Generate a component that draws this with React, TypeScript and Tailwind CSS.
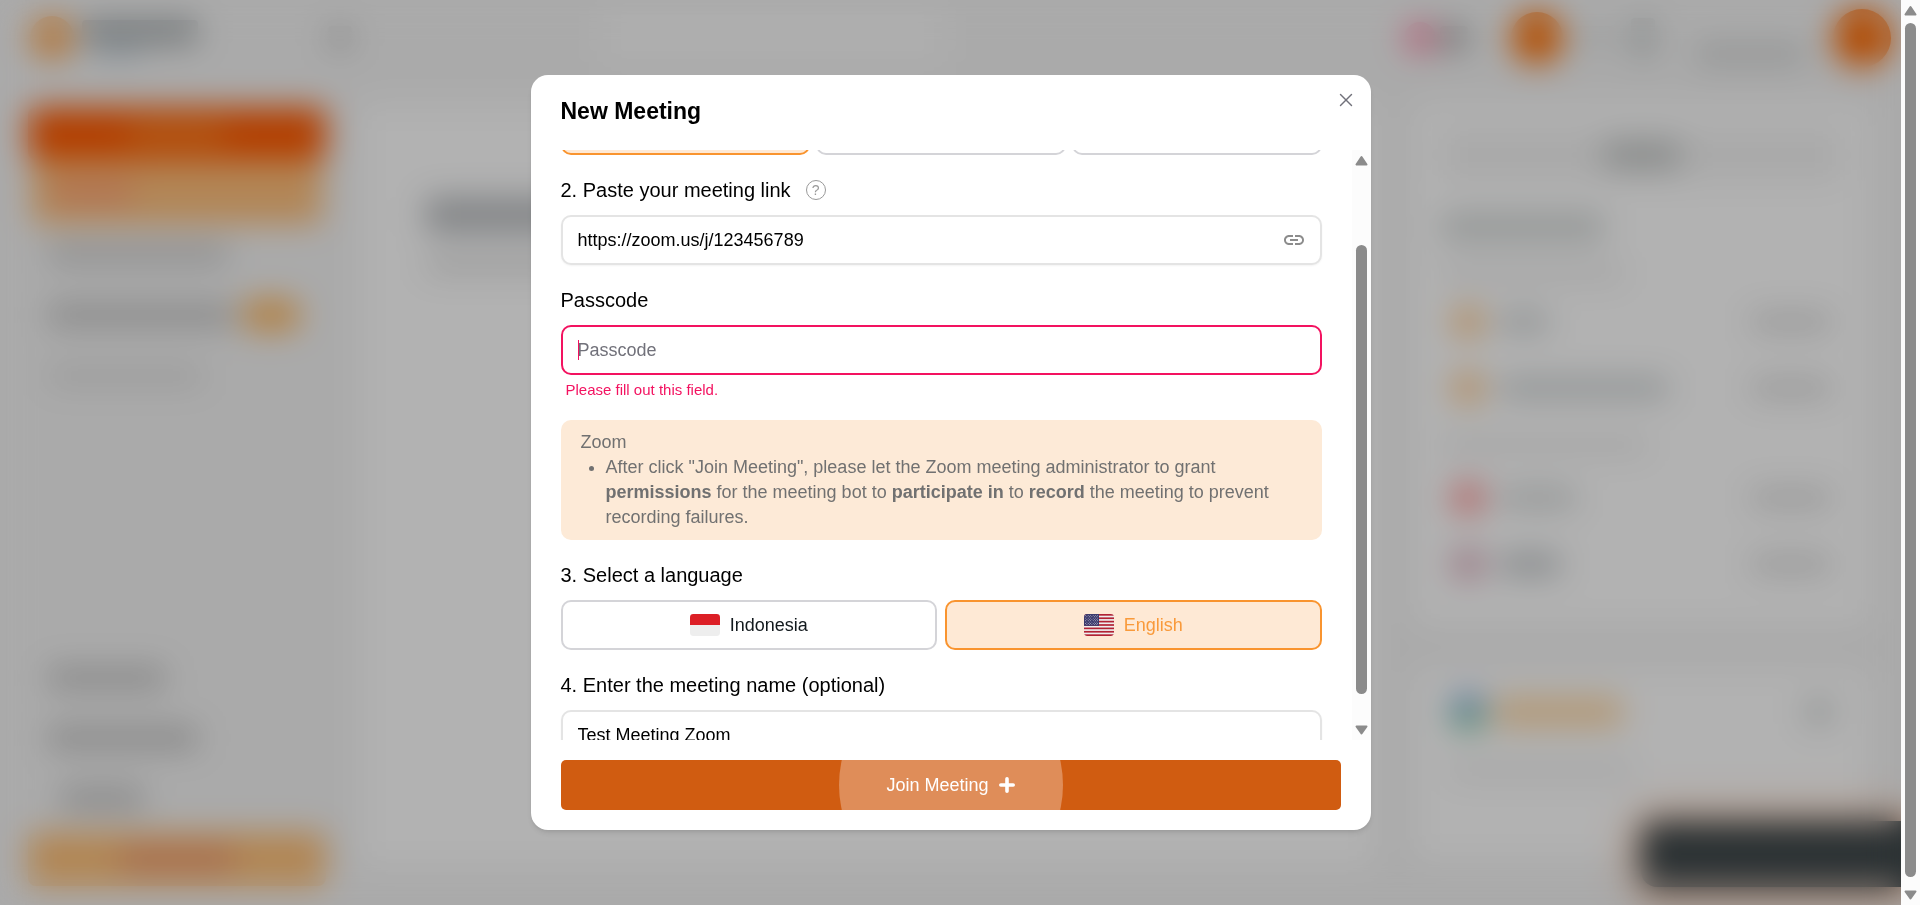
import { useLayoutEffect, useRef, useState } from "react";
import type { ReactNode } from "react";
import { X } from "lucide-react";
import { MdLink } from "react-icons/md";

/* ---------- Scrollbars ---------- */

function Arrow({ down = false }: { down?: boolean }) {
  return (
    <svg viewBox="0 0 19 19" className="size-[19px] shrink-0" aria-hidden="true">
      <path
        d={down ? "M4.5 5.5h10l-5 7z" : "M4.5 14.5h10l-5 -7.5z"}
        fill="#8b8b8b"
        stroke="#8b8b8b"
        strokeWidth="2"
        strokeLinejoin="round"
      />
    </svg>
  );
}

function Scrollbar({ before, thumb, after }: { before: number; thumb: number; after: number }) {
  return (
    <div aria-hidden="true" className="flex w-[19px] shrink-0 flex-col items-center bg-[#fcfcfc]">
      <Arrow />
      <div style={{ flexGrow: before }} />
      <div className="w-[11px] rounded-full bg-[#8b8b8b]" style={{ flexGrow: thumb }} />
      <div style={{ flexGrow: after }} />
      <Arrow down />
    </div>
  );
}

/* ---------- Dashboard behind the dialog ---------- */

function ListRow({ icon, name }: { icon: string; name: string }) {
  return (
    <div className="flex h-[66px] items-center">
      <span className={`size-8 rounded-full ${icon}`} />
      <span className={`ml-4 h-5 rounded ${name}`} />
      <span className="ml-auto h-5 w-20 rounded bg-[#dcdcdc]" />
    </div>
  );
}

function Dashboard() {
  return (
    <div aria-hidden="true" className="flex h-full flex-col bg-[#f4f4f4]">
      <div className="flex h-[75px] shrink-0 items-center pl-[30px]">
        <span className="size-11 rounded-full bg-[#ffac5a]" />
        <div className="ml-2 flex flex-col gap-1">
          <span className="h-6 w-[116px] rounded bg-[#a8aeb0]" />
          <span className="ml-3 h-2 w-12 rounded bg-[#b4cbdc]" />
        </div>
        <span className="ml-[130px] size-6 rounded bg-[#cacaca]" />
        <span className="ml-[248px] h-12 w-[345px] rounded-lg bg-[#fafafa]" />
        <div className="ml-auto flex items-center pr-[10px]">
          <span className="size-8 rounded-full bg-[#ff90ae]" />
          <span className="ml-1 h-6 w-7 rounded bg-[#ababab]" />
          <span className="ml-[43px] size-[52px] rounded-full bg-[#ff7206]" />
          <span className="ml-3 h-6 w-10 rounded bg-[#e4e6e6]" />
          <span className="ml-4 h-10 w-6 rounded bg-[#cdd1d1]" />
          <span className="ml-10 mt-8 h-6 w-[110px] rounded bg-[#d8dada]" />
          <span className="ml-[28px] size-[58px] rounded-full bg-[#ff6a00]" />
        </div>
      </div>

      <div className="flex min-h-0 flex-1">
        <div className="flex w-[360px] shrink-0 flex-col pb-[19px] pl-[28px] pr-[34px]">
          <div className="mt-[32px] flex h-[53px] shrink-0 items-center justify-center rounded-lg bg-[#ff5a00]">
            <span className="h-4 w-24 rounded bg-[#ff8c28]" />
          </div>
          <div className="mx-1 flex h-[64px] shrink-0 items-center rounded-lg bg-[#ffc07c] pl-5">
            <span className="h-5 w-20 rounded bg-[#ff9f75]" />
          </div>
          <div className="flex h-[60px] shrink-0 items-center pl-5">
            <span className="h-5 w-[180px] rounded bg-[#cccccc]" />
          </div>
          <div className="flex h-[62px] shrink-0 items-center pl-5">
            <span className="h-6 w-[185px] rounded bg-[#c8c8c8]" />
            <span className="ml-2 h-8 w-[60px] rounded-full bg-[#ffb860]" />
          </div>
          <div className="flex h-[60px] shrink-0 items-center pl-5">
            <span className="h-5 w-[155px] rounded bg-[#dedede]" />
          </div>
          <div className="mt-auto flex h-[60px] items-center pl-5">
            <span className="h-6 w-[118px] rounded bg-[#c8c8c8]" />
          </div>
          <div className="flex h-[60px] items-center pl-5">
            <span className="h-6 w-[150px] rounded bg-[#c6c6c6]" />
          </div>
          <div className="mb-1 flex h-[60px] items-center pl-8">
            <span className="h-6 w-[84px] rounded bg-[#c8c8c8]" />
          </div>
          <div className="flex h-[54px] items-center justify-center rounded-lg bg-[#ffc078]">
            <span className="h-6 w-28 rounded bg-[#ee9c70]" />
          </div>
        </div>

        <div className="mb-[38px] mt-[30px] flex-1 rounded-xl bg-white px-[66px] pt-[92px]">
          <div className="h-9 w-[260px] rounded bg-[#bcbfc2]" />
          <div className="mt-6 h-4 w-[200px] rounded bg-[#dcdcdc]" />
        </div>

        <div className="ml-10 mr-8 mt-[30px] flex w-[455px] shrink-0 flex-col gap-[45px]">
          <div className="flex h-[520px] shrink-0 flex-col rounded-xl bg-white px-[28px]">
            <div className="mt-6 flex h-[52px] shrink-0 items-center justify-center rounded-lg bg-[#f3f3f3]">
              <span className="h-7 w-[76px] rounded bg-[#c6c9c8]" />
            </div>
            <span className="mt-8 h-7 w-[162px] shrink-0 rounded bg-[#d6dad9]" />
            <span className="mt-6 h-4 w-[182px] shrink-0 rounded bg-[#eaeaea]" />
            <div className="mt-2 px-[10px]">
              <ListRow icon="bg-[#ffc888]" name="w-12 bg-[#ced3d4]" />
              <ListRow icon="bg-[#ffc888]" name="w-[168px] bg-[#ced3d4]" />
            </div>
            <span className="mt-4 h-4 w-[205px] shrink-0 rounded bg-[#eaeaea]" />
            <div className="mt-3 px-[10px]">
              <ListRow icon="bg-[#ff8c8c]" name="w-[76px] bg-[#d4d8d8]" />
              <ListRow icon="bg-[#dcaabb]" name="w-[60px] bg-[#bcc1c4]" />
            </div>
          </div>
          <div className="flex h-[190px] shrink-0 flex-col rounded-xl bg-white px-[36px] pt-[24px]">
            <div className="flex items-center">
              <span className="flex size-9 flex-col overflow-hidden rounded-full bg-[#78c8a0]">
                <span className="h-4 bg-[#86acf0]" />
              </span>
              <span className="ml-2 h-7 w-[128px] rounded bg-[#ffd8a4]" />
              <span className="ml-auto size-7 rounded bg-[#d8dbda]" />
            </div>
            <span className="mt-8 h-4 w-[182px] rounded bg-[#ececec]" />
          </div>
        </div>
      </div>
      <div className="absolute bottom-[18px] right-0 h-[66px] w-[260px] rounded-l-2xl bg-[#3f484b] shadow-[0_0_28px_12px_rgba(255,140,70,0.4)]" />
    </div>
  );
}

/* ---------- Flags ---------- */

function IndonesiaFlag() {
  return (
    <svg viewBox="0 0 36 26" className="h-[22px] w-[30px]" preserveAspectRatio="none" aria-hidden="true">
      <path fill="#DC1F26" d="M32 0H4a4 4 0 0 0-4 4v9h36V4a4 4 0 0 0-4-4z" />
      <path fill="#EEE" d="M36 22a4 4 0 0 1-4 4H4a4 4 0 0 1-4-4v-9h36v9z" />
    </svg>
  );
}

const starRows = [1.6, 3.2, 4.8, 6.4, 8, 9.6, 11.2, 12.6];

function UsaFlag() {
  return (
    <svg viewBox="0 0 36 26" className="h-[22px] w-[30px]" preserveAspectRatio="none" aria-hidden="true">
      <defs>
        <clipPath id="usa-outline">
          <rect width="36" height="26" rx="4" />
        </clipPath>
      </defs>
      <g clipPath="url(#usa-outline)">
        <rect width="36" height="26" fill="#EEE" />
        {[0, 4, 8, 12, 16, 20, 24].map((y) => (
          <rect key={y} y={y} width="36" height="2" fill="#B22334" />
        ))}
        <rect width="18" height="14" fill="#3C3B6E" />
        {starRows.map((y, row) =>
          (row % 2 === 0 ? [2, 5, 8, 11, 14, 16.4] : [3.5, 6.5, 9.5, 12.5, 15.4]).map((x) => (
            <circle key={`${x}-${y}`} cx={x} cy={y} r="0.5" fill="#fff" />
          )),
        )}
      </g>
    </svg>
  );
}

/* ---------- Form parts ---------- */

const optionBase =
  "flex h-[50px] flex-1 items-center justify-center gap-[10px] rounded-[10px] border-2 text-[18px] leading-[25px]";
const optionIdle = "border-[#d4d4d8] bg-white text-[#11181c]";
const optionActive = "border-[#f9942f] bg-[#fee9d5] text-[#f99a3b]";

function Option({
  selected,
  onSelect,
  children,
}: {
  selected: boolean;
  onSelect: () => void;
  children: ReactNode;
}) {
  return (
    <button
      type="button"
      aria-pressed={selected}
      onClick={onSelect}
      className={`${optionBase} ${selected ? optionActive : optionIdle}`}
    >
      {children}
    </button>
  );
}

const inputBase =
  "h-[50px] w-full rounded-[10px] border-2 bg-white px-[15px] text-[18px] leading-[25px] text-black outline-none";
const fieldLabel = "text-[20px] leading-[30px] text-black";

function MeetingDialog() {
  const scroller = useRef<HTMLDivElement>(null);
  const [platform, setPlatform] = useState("Zoom");
  const [language, setLanguage] = useState("English");

  useLayoutEffect(() => {
    if (scroller.current) scroller.current.scrollTop = 100;
  }, []);

  return (
    <div
      role="dialog"
      aria-modal="true"
      aria-labelledby="dialog-title"
      className="relative flex max-h-[calc(100vh-150px)] w-full max-w-[840px] flex-col overflow-hidden rounded-[17px] bg-white shadow-md"
    >
      <header className="shrink-0 px-[30px] pb-[22px] pt-[20px]">
        <h2 id="dialog-title" className="text-[23px] font-bold leading-[33px] text-black">
          New Meeting
        </h2>
      </header>
      <button
        type="button"
        aria-label="Close"
        className="absolute right-[13px] top-[13px] flex size-6 items-center justify-center text-[#71717a]"
      >
        <X size={22} strokeWidth={1.5} />
      </button>

      <div className="flex min-h-0 flex-1">
        <div
          ref={scroller}
          className="flex min-w-0 flex-1 flex-col gap-5 overflow-y-auto px-[30px] pb-[15px] pt-[15px] [scrollbar-width:none]"
        >
          <section className="flex flex-col gap-[10px]">
            <h3 className={fieldLabel}>1. Select a platform</h3>
            <div className="flex gap-[6px]">
              {["Zoom", "Google Meet", "Microsoft Teams"].map((name) => (
                <Option key={name} selected={platform === name} onSelect={() => setPlatform(name)}>
                  {name}
                </Option>
              ))}
            </div>
          </section>

          <section className="flex flex-col gap-[10px]">
            <div className="flex items-center gap-[15px]">
              <label htmlFor="meeting-link" className={fieldLabel}>
                2. Paste your meeting link
              </label>
              <button
                type="button"
                aria-label="Help"
                className="flex size-5 items-center justify-center rounded-full border border-[#999999] text-[14px] leading-none text-[#999999]"
              >
                ?
              </button>
            </div>
            <div className="relative">
              <input
                id="meeting-link"
                type="url"
                defaultValue="https://zoom.us/j/123456789"
                className={`${inputBase} border-[#e4e4e4] shadow-xs`}
              />
              <MdLink size={24} className="absolute right-4 top-[13px] text-[#8c8c8c]" />
            </div>
          </section>

          <section className="flex flex-col gap-[10px]">
            <label htmlFor="passcode" className={fieldLabel}>
              Passcode
            </label>
            <div className="relative">
              <input
                id="passcode"
                type="text"
                placeholder="Passcode"
                aria-invalid="true"
                aria-describedby="passcode-error"
                className={`${inputBase} border-[#f31260] caret-transparent placeholder:text-[#71717a]`}
              />
              <span className="absolute left-[17px] top-[15px] h-5 w-px bg-[#f31260]" />
              <p id="passcode-error" className="pl-[5px] pt-[5px] text-[15px] leading-5 text-[#f31260]">
                Please fill out this field.
              </p>
            </div>
          </section>

          <div className="rounded-[10px] bg-[#fdead7] px-5 py-[10px] text-[18px] leading-[25px] text-[#717171]">
            <p>Zoom</p>
            <ul className="list-disc pl-[25px]">
              <li>
                After click "Join Meeting", please let the Zoom meeting administrator to grant{" "}
                <strong>permissions</strong> for the meeting bot to <strong>participate in</strong> to{" "}
                <strong>record</strong> the meeting to prevent recording failures.
              </li>
            </ul>
          </div>

          <section className="flex flex-col gap-[10px]">
            <h3 className={fieldLabel}>3. Select a language</h3>
            <div className="flex gap-2">
              <Option selected={language === "Indonesia"} onSelect={() => setLanguage("Indonesia")}>
                <IndonesiaFlag />
                Indonesia
              </Option>
              <Option selected={language === "English"} onSelect={() => setLanguage("English")}>
                <UsaFlag />
                English
              </Option>
            </div>
          </section>

          <section className="flex flex-col gap-[10px]">
            <label htmlFor="meeting-name" className={fieldLabel}>
              4. Enter the meeting name (optional)
            </label>
            <input
              id="meeting-name"
              type="text"
              defaultValue="Test Meeting Zoom"
              className={`${inputBase} border-[#e4e4e4] shadow-xs`}
            />
          </section>
        </div>
        <Scrollbar before={76} thumb={449} after={27} />
      </div>

      <footer className="shrink-0 px-[30px] py-5">
        <button
          type="button"
          className="relative flex h-[50px] w-full items-center justify-center overflow-hidden rounded-[5px] bg-[#d05c11] text-[18px] leading-[25px] text-white"
        >
          <span className="absolute left-1/2 top-1/2 size-[224px] -translate-x-1/2 -translate-y-1/2 rounded-full bg-[#df8d59]" />
          <span className="relative flex items-center gap-[10px]">
            Join Meeting
            <svg viewBox="0 0 16 16" className="size-4" aria-hidden="true">
              <path d="M8 1.8v12.4M1.8 8h12.4" stroke="currentColor" strokeWidth="3.6" strokeLinecap="round" />
            </svg>
          </span>
        </button>
      </footer>
    </div>
  );
}

export default function App() {
  return (
    <div className="flex h-screen font-['Liberation_Sans',Arial,sans-serif]">
      <div className="relative min-w-0 flex-1 overflow-hidden">
        <Dashboard />
        <div className="absolute inset-0 flex items-center justify-center bg-black/30 backdrop-blur-lg">
          <MeetingDialog />
        </div>
      </div>
      <Scrollbar before={4} thumb={854} after={9} />
    </div>
  );
}
